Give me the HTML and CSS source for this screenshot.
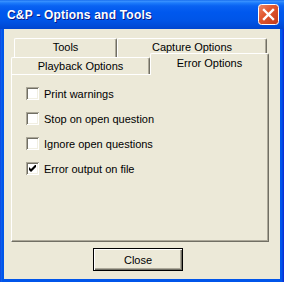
FILE: index.html
```html
<!DOCTYPE html>
<html lang="en">
<head>
    <meta charset="UTF-8">
    <title>C&amp;P - Options and Tools</title>
    <link rel="stylesheet" href="styles.css">
</head>
<body>
    <div class="window">
        <div class="titlebar">
            <span class="title">C&amp;P - Options and Tools</span>
            <span class="close-x">
                <svg width="21" height="21" viewBox="0 0 21 21">
                    <defs>
                        <linearGradient id="red" x1="0" y1="0" x2="1" y2="1">
                            <stop offset="0" stop-color="#ec8a6c"/>
                            <stop offset="0.4" stop-color="#e2582f"/>
                            <stop offset="1" stop-color="#c0391b"/>
                        </linearGradient>
                    </defs>
                    <rect x="0.5" y="0.5" width="20" height="20" rx="3" fill="url(#red)" stroke="#fff"/>
                    <path d="M6 6 L15 15 M15 6 L6 15" stroke="#fff" stroke-width="2.4" stroke-linecap="square"/>
                </svg>
            </span>
        </div>
        <div class="client">
            <div class="tabs">
                <div class="tab-row back">
                    <div class="tab tools">Tools</div>
                    <div class="tab capture">Capture Options</div>
                </div>
                <div class="tab-row front">
                    <div class="tab playback">Playback Options</div>
                    <div class="tab active">Error Options</div>
                </div>
                <div class="panel">
                    <label class="check"><span class="box"></span>Print warnings</label>
                    <label class="check"><span class="box"></span>Stop on open question</label>
                    <label class="check"><span class="box"></span>Ignore open questions</label>
                    <label class="check"><span class="box checked"><svg width="7" height="7" viewBox="0 0 7 7"><path d="M0 2 L2 4 L7 -1 L7 2 L2 7 L0 5 Z" fill="#000"/></svg></span>Error output on file</label>
                </div>
            </div>
            <div class="buttons">
                <button class="btn">Close</button>
            </div>
        </div>
    </div>
</body>
</html>
```
FILE: styles.css
```css
body {
    margin: 0;
    font-family: "Liberation Sans", Arial, sans-serif;
    font-size: 11px;
    color: #000;
}
.window {
    width: 284px;
    height: 282px;
    display: flex;
    flex-direction: column;
    background: linear-gradient(to right, #0831d9 0, #166aee 1px, #0055ea 2px, #0055ea 282px, #0831d9 283px);
}
.titlebar {
    height: 29px;
    display: flex;
    align-items: center;
    padding: 0 5px 0 7px;
    background: linear-gradient(to bottom, #0a5fe8 0, #3d95ff 1px, #1c7bfb 3px, #0962f2 6px, #0058ee 12px, #0055e8 20px, #004ddb 25px, #0045cf 29px);
}
.title {
    color: #fff;
    font-weight: bold;
    font-size: 12px;
    letter-spacing: 0.2px;
    text-shadow: 1px 1px #0a1883;
    padding-top: 1px;
}
.close-x {
    margin-left: auto;
    width: 21px;
    height: 21px;
    display: block;
}
.close-x svg {
    display: block;
}
.client {
    flex: 1;
    margin: 0 4px 3px 4px;
    background: #ece9d8;
    padding-top: 9px;
}
.tabs {
    width: 258px;
    margin-left: 7px;
}
.tab-row {
    display: flex;
}
.tab-row.back {
    height: 19px;
    margin-left: 3px;
}
.tab-row.front {
    height: 17px;
}
.tab {
    box-sizing: border-box;
    background: #ece9d8;
    border-top: 1px solid #fff;
    border-left: 1px solid #fff;
    border-right: 1px solid #716f64;
    box-shadow: inset -1px 0 #aca899;
    border-top-left-radius: 2px;
    border-top-right-radius: 2px;
    text-align: center;
    line-height: 17px;
}
.tools {
    width: 103px;
}
.capture {
    width: 150px;
}
.playback {
    width: 139px;
    line-height: 16px;
}
.tab.active {
    width: 119px;
    height: 22px;
    margin-top: -4px;
    position: relative;
    z-index: 1;
    line-height: 19px;
}
.panel {
    box-sizing: border-box;
    height: 168px;
    border-top: 1px solid #fff;
    border-left: 1px solid #fff;
    border-right: 1px solid #716f64;
    border-bottom: 1px solid #716f64;
    box-shadow: inset -1px -1px #aca899;
    padding: 12px 0 0 14px;
    display: flex;
    flex-direction: column;
    gap: 12px;
}
.check {
    display: flex;
    align-items: center;
    gap: 5px;
    height: 13px;
}
.box {
    width: 13px;
    height: 13px;
    box-sizing: border-box;
    background: #fff;
    box-shadow: inset 1px 1px #aca899, inset -1px -1px #fff, inset 2px 2px #716f64, inset -2px -2px #f1efe2;
    display: flex;
    align-items: center;
    justify-content: center;
}
.box svg {
    display: block;
}
.buttons {
    padding: 6px 0 0 89px;
}
.btn {
    width: 90px;
    height: 23px;
    border: 1px solid #000;
    background: #ece9d8;
    box-shadow: inset 1px 1px #fff, inset -1px -1px #716f64, inset -2px -2px #aca899;
    font-family: "Liberation Sans", Arial, sans-serif;
    font-size: 11px;
    color: #000;
    padding: 0;
}
```
